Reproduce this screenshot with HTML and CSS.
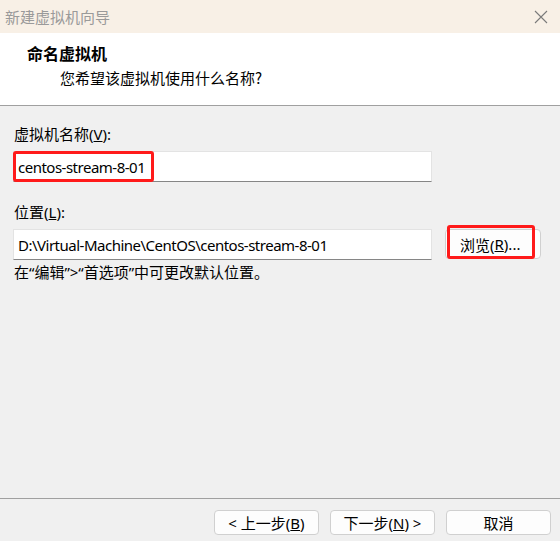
FILE: index.html
```html
<!DOCTYPE html>
<html lang="zh-CN">
<head>
<meta charset="utf-8">
<link rel="stylesheet" href="styles.css">
</head>
<body>
<div class="window">
  <div class="titlebar">
    <span class="title">新建虚拟机向导</span>
    <svg class="close" width="14" height="14" viewBox="0 0 14 14"><path d="M1 1 L13 13 M13 1 L1 13" stroke="#7a7a7a" stroke-width="1.1" fill="none"/></svg>
  </div>
  <div class="header">
    <div class="h-title">命名虚拟机</div>
    <div class="h-sub">您希望该虚拟机使用什么名称?</div>
  </div>
  <div class="content">
    <div class="label">虚拟机名称(<u>V</u>):</div>
    <div class="row">
      <div class="input wide">
        <span class="val">centos-stream-8-01</span>
        <span class="mark mark-name"></span>
      </div>
    </div>
    <div class="label label2">位置(<u>L</u>):</div>
    <div class="row">
      <div class="input wide">
        <span class="val">D:\Virtual-Machine\CentOS\centos-stream-8-01</span>
      </div>
      <div class="btn browse">浏览(<u>R</u>)...
        <span class="mark mark-browse"></span>
      </div>
    </div>
    <div class="hint">在“编辑”&gt;“首选项”中可更改默认位置。</div>
  </div>
  <div class="footer">
    <div class="btn fbtn">&lt; 上一步(<u>B</u>)</div>
    <div class="btn fbtn">下一步(<u>N</u>) &gt;</div>
    <div class="btn fbtn">取消</div>
  </div>
</div>
</body>
</html>
```
FILE: styles.css
```css
html, body {
  margin: 0;
  padding: 0;
}
body {
  width: 560px;
  height: 541px;
  overflow: hidden;
  background: #f0f0f0;
  font-family: "Noto Sans", "Noto Sans CJK SC", sans-serif;
  font-size: 15px;
  color: #000;
}
.window {
  display: flex;
  flex-direction: column;
  height: 541px;
}
.titlebar {
  height: 33px;
  flex: none;
  background: #f8f0e6;
  display: flex;
  align-items: center;
  justify-content: space-between;
  padding: 0 12px 0 5px;
}
.title {
  color: #9a9a9a;
  font-size: 15px;
  font-family: "Noto Sans CJK SC", sans-serif;
}
.close {
  display: block;
}
.header {
  flex: none;
  background: #fff;
  height: 73px;
  border-bottom: 1px solid #a0a0a0;
  box-sizing: border-box;
  padding-top: 9px;
  font-family: "Noto Sans CJK SC", sans-serif;
}
.h-title {
  font-weight: bold;
  font-size: 16px;
  line-height: 22px;
  padding-left: 27px;
}
.h-sub {
  font-size: 15px;
  line-height: 22px;
  padding-left: 60px;
  margin-top: 3px;
}
.content {
  flex: 1;
  padding: 17px 0 0 13px;
  border-bottom: 1px solid #a0a0a0;
}
.label {
  line-height: 22px;
  padding-left: 1px;
  height: 22px;
}
.label2 {
  margin-top: 19px;
}
.row {
  display: flex;
  align-items: flex-start;
  margin-top: 6px;
  gap: 13px;
}
.row + .hint {
  margin-top: 1px;
}
.input {
  position: relative;
  background: #fff;
  border: 1px solid #e3e3e3;
  border-bottom: 1px solid #868686;
  box-sizing: border-box;
  height: 31px;
  display: flex;
  align-items: center;
  padding-left: 4px;
}
.wide {
  width: 419px;
}
.val {
  white-space: nowrap;
  letter-spacing: -0.5px;
}
.btn {
  position: relative;
  background: #fdfdfd;
  border: 1px solid #d0d0d0;
  border-radius: 4px;
  box-sizing: border-box;
  display: flex;
  align-items: center;
  justify-content: center;
  white-space: nowrap;
}
.browse {
  width: 96px;
  height: 30px;
  justify-content: flex-start;
  padding-left: 14px;
}
.mark {
  position: absolute;
  border: 3px solid #ff1a1a;
  border-radius: 3px;
  box-sizing: border-box;
}
.mark-name {
  left: -1px;
  top: -1px;
  width: 141px;
  height: 31px;
}
.mark-browse {
  left: 1px;
  top: -5px;
  width: 88px;
  height: 34px;
}
.hint {
  line-height: 22px;
  padding-left: 1px;
}
.footer {
  flex: none;
  height: 42px;
  box-sizing: border-box;
  display: flex;
  align-items: flex-start;
  padding: 11px 9px 0 0;
  justify-content: flex-end;
  gap: 11px;
}
.fbtn {
  width: 105px;
  height: 25px;
}
```
